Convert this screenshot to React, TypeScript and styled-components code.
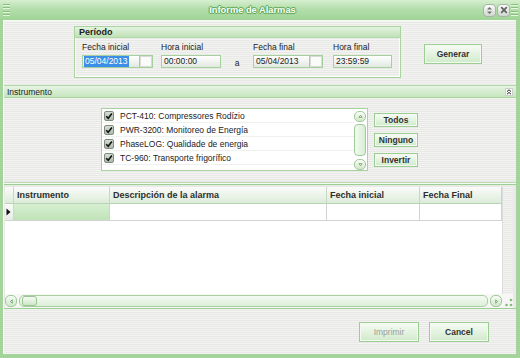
import React from 'react';
import styled, { createGlobalStyle, css } from 'styled-components';

const GlobalStyle = createGlobalStyle`
  html, body { margin: 0; padding: 0; background: #fff; }
  body { font-family: "Liberation Sans", Arial, sans-serif; }
  * { box-sizing: border-box; }
  #root { width: 520px; height: 358px; }
`;

const stripes = css`
  background: repeating-linear-gradient(
    to bottom,
    #f3f3f1 0px,
    #f3f3f1 1px,
    #e8e9e6 1px,
    #e8e9e6 2px
  );
`;

const Window = styled.div`
  width: 520px;
  height: 358px;
  display: flex;
  flex-direction: column;
  background: #a4d49b;
  overflow: hidden;
`;

const TitleBar = styled.div`
  height: 20px;
  flex: none;
  display: flex;
  align-items: center;
  padding: 0 2px 0 3px;
  background: linear-gradient(#d6efd0, #b4deab 45%, #9fd496);
`;

const Grip = styled.div`
  width: 7px;
  height: 14px;
  display: flex;
  flex-direction: column;
  justify-content: space-between;
  padding: 1px 0;
`;

const GripLine = styled.div`
  height: 2px;
  border-top: 1px solid #86c27c;
  border-bottom: 1px solid #e6f5e2;
`;

const Title = styled.div`
  flex: 1;
  text-align: center;
  font-size: 9.3px;
  font-weight: bold;
  color: #fbfff9;
  padding-left: 12px;
  text-shadow: 1px 0 0 #5ea853, -1px 0 0 #5ea853, 0 1px 0 #5ea853, 0 -1px 0 #5ea853,
    0 0 2px #3f8a35;
`;

const TitleButton = styled.div`
  width: 13px;
  height: 13px;
  border-radius: 4px;
  border: 1px solid #a9b3a8;
  background: linear-gradient(#fbfbfb, #d2d6d1);
  display: flex;
  align-items: center;
  justify-content: center;
  margin-right: 1px;
`;

const Frame = styled.div`
  flex: 1;
  display: flex;
  padding: 0 4px 4px 3px;
  min-height: 0;
`;

const Client = styled.div`
  flex: 1;
  display: flex;
  flex-direction: column;
  border-left: 1px solid #f7fbf6;
  border-top: 1px solid #f7fbf6;
  min-height: 0;
`;

const TopPanel = styled.div`
  ${stripes};
  height: 65px;
  flex: none;
  display: flex;
  align-items: flex-start;
  padding: 5px 0 0 70px;
  border-bottom: 1px solid #b2daa9;
`;

const GroupBox = styled.div`
  width: 327px;
  height: 52px;
  border: 1px solid #a9d4a0;
  box-shadow: inset 0 0 0 1px #fbfdfb;
  display: flex;
  flex-direction: column;
`;

const GroupHeader = styled.div`
  height: 11px;
  line-height: 11px;
  padding-left: 4px;
  font-size: 9px;
  font-weight: bold;
  color: #222;
  background: linear-gradient(#e3f3df, #bfe2b7);
  border-bottom: 1px solid #b3d9aa;
`;

const FieldsRow = styled.div`
  display: flex;
  align-items: flex-end;
  padding: 4px 0 0 7px;
`;

const Field = styled.div<{ $w: number; $mr?: number }>`
  width: ${(p) => p.$w}px;
  margin-right: ${(p) => p.$mr ?? 0}px;
  display: flex;
  flex-direction: column;
  gap: 2px;
`;

const Label = styled.div`
  font-size: 8.5px;
  line-height: 11px;
  height: 11px;
  color: #222;
`;

const inputBase = css`
  height: 13px;
  border: 1px solid #a6d09d;
  background: linear-gradient(#ffffff, #e2e9e0);
  font-size: 8.5px;
  line-height: 11px;
  color: #222;
`;

const Combo = styled.div`
  ${inputBase};
  display: flex;
`;

const ComboText = styled.div<{ $pl?: number }>`
  flex: 1;
  padding-left: ${(p) => p.$pl ?? 1}px;
  overflow: hidden;
  white-space: nowrap;
`;

const Selected = styled.span`
  background: #3b8fe6;
  color: #fff;
  padding: 0 1px;
  display: inline-block;
  line-height: 11px;
`;

const ComboButton = styled.div`
  width: 13px;
  border-left: 1px solid #a6d09d;
  background: #fbfbfb;
  box-shadow: inset 0 0 0 1px #d6dcd5;
`;

const TextInput = styled.div`
  ${inputBase};
  padding-left: 2px;
`;

const Sep = styled.div`
  width: 6px;
  margin: 0 13px;
  font-size: 8.5px;
  line-height: 10px;
  color: #222;
  text-align: center;
`;

const Button = styled.div<{ $w: number; $h: number; $disabled?: boolean }>`
  width: ${(p) => p.$w}px;
  height: ${(p) => p.$h}px;
  flex: none;
  border: 1px solid #9ccd93;
  background: linear-gradient(#f7fcf6, #d0eaca);
  box-shadow: inset 0 0 0 1px #f4faf2;
  display: flex;
  align-items: center;
  justify-content: center;
  font-size: 8.5px;
  font-weight: ${(p) => (p.$disabled ? 'normal' : 'bold')};
  color: ${(p) => (p.$disabled ? '#9aa09a' : '#333')};
`;

const GenerarWrap = styled.div`
  margin: 18px 0 0 23px;
`;

const SectionHeader = styled.div`
  height: 12px;
  flex: none;
  display: flex;
  align-items: center;
  padding: 0 3px 0 3px;
  font-size: 8.5px;
  color: #222;
  background: linear-gradient(#e6f4e2, #c6e5bf);
  border-bottom: 1px solid #a8d59e;
`;

const SectionTitle = styled.div`
  flex: 1;
`;

const CollapseBtn = styled.div`
  width: 8px;
  height: 8px;
  background: #fbfbfb;
  border: 1px solid #c9d2c8;
  display: flex;
  align-items: center;
  justify-content: center;
`;

const InstrPanel = styled.div`
  ${stripes};
  height: 82px;
  flex: none;
  display: flex;
  align-items: flex-start;
  padding: 10px 0 0 97px;
`;

const ListBox = styled.div`
  width: 267px;
  height: 63px;
  border: 1px solid #a9d4a0;
  background: #fff;
  display: flex;
`;

const ListRows = styled.div`
  flex: 1;
  display: flex;
  flex-direction: column;
`;

const ListRow = styled.div`
  height: 14px;
  display: flex;
  align-items: center;
  padding-left: 2px;
  border-bottom: 1px solid #eef1ee;
  font-size: 8.5px;
  color: #222;
  white-space: nowrap;
`;

const CheckBox = styled.div`
  width: 10px;
  height: 10px;
  border-radius: 2px;
  border: 1px solid #7e8c7d;
  background: linear-gradient(#d5ddd4, #aebbad);
  display: flex;
  align-items: center;
  justify-content: center;
  margin-right: 6px;
`;

const VScroll = styled.div`
  width: 13px;
  display: flex;
  flex-direction: column;
  padding: 2px 0 0 0;
  background: #fff;
`;

const ScrollArrow = styled.div`
  width: 12px;
  height: 11px;
  border: 1px solid #a1c99a;
  border-radius: 5px;
  background: linear-gradient(#fafdf9, #d0e8ca);
  display: flex;
  align-items: center;
  justify-content: center;
`;

const VThumb = styled.div`
  width: 12px;
  height: 32px;
  margin: 2px 0;
  border: 1px solid #9fc998;
  border-radius: 4px;
  background: linear-gradient(to right, #f4faf3, #d8edd3);
`;

const VTrackRest = styled.div`
  flex: 1;
`;

const SideButtons = styled.div`
  display: flex;
  flex-direction: column;
  gap: 6px;
  margin: 5px 0 0 6px;
`;

const Splitter = styled.div`
  height: 5px;
  flex: none;
  background: linear-gradient(
    to bottom,
    #eeeeec 0px,
    #e6e7e4 2px,
    #b6dcad 2px,
    #b6dcad 3px,
    #f5faf4 3px,
    #f5faf4 4px,
    #9ccf93 4px,
    #9ccf93 5px
  );
`;

const Grid = styled.div`
  height: 124px;
  flex: none;
  display: flex;
  flex-direction: column;
  padding: 2px 3px 0 1px;
  background: #e9eae7;
  border-bottom: 1px solid #9ccf93;
`;

const GridMain = styled.div`
  flex: 1;
  display: flex;
  min-height: 0;
`;

const Table = styled.div`
  width: 497px;
  background: #fff;
  display: flex;
  flex-direction: column;
`;

const Row = styled.div`
  display: flex;
  height: 17px;
`;

const HeadCell = styled.div<{ $w: number }>`
  width: ${(p) => p.$w}px;
  height: 17px;
  flex: none;
  padding-left: 3px;
  font-size: 9px;
  font-weight: bold;
  line-height: 16px;
  color: #2e2e2e;
  background: linear-gradient(#fbfbfa, #dcecd9);
  border-right: 1px solid #c8d6c6;
  border-bottom: 1px solid #b9d4b5;
  white-space: nowrap;
  overflow: hidden;
`;

const Cell = styled.div<{ $w: number; $sel?: boolean }>`
  width: ${(p) => p.$w}px;
  height: 17px;
  flex: none;
  border-right: 1px solid #d2d2d2;
  border-bottom: 1px solid #d2d2d2;
  background: ${(p) => (p.$sel ? 'linear-gradient(#d6f0d1, #bfe3b8)' : '#fff')};
`;

const RowHeadCell = styled.div`
  width: 9px;
  height: 17px;
  flex: none;
  border-right: 1px solid #d2d2d2;
  border-bottom: 1px solid #d2d2d2;
  background: linear-gradient(#fbfbfa, #e6ece5);
  display: flex;
  align-items: center;
  padding-left: 1px;
`;

const VGutter = styled.div`
  ${stripes};
  flex: 1;
  border-left: 1px solid #dcdcdc;
`;

const HScroll = styled.div`
  height: 14px;
  flex: none;
  display: flex;
  align-items: center;
  gap: 2px;
  background: #f6f6f5;
`;

const HArrow = styled.div`
  width: 12px;
  height: 12px;
  border: 1px solid #a1c99a;
  border-radius: 5px;
  background: linear-gradient(#f7fcf6, #cfe7c9);
  display: flex;
  align-items: center;
  justify-content: center;
`;

const HTrack = styled.div`
  flex: 1;
  height: 12px;
  border: 1px solid #a7cfa0;
  border-radius: 5px;
  background: linear-gradient(#f4faf3, #dcefd8);
  padding: 0 2px;
  display: flex;
  align-items: center;
`;

const HThumb = styled.div`
  width: 15px;
  height: 10px;
  border: 1px solid #98c491;
  border-radius: 3px;
  background: linear-gradient(#f6fbf5, #cde6c7);
`;

const GripDots = styled.div`
  width: 9px;
  height: 12px;
  flex: none;
  display: flex;
  align-items: flex-end;
  justify-content: flex-end;
`;

const BottomPanel = styled.div`
  ${stripes};
  flex: 1;
  display: flex;
  justify-content: flex-end;
  align-items: flex-start;
  gap: 10px;
  padding: 13px 27px 0 0;
`;

const Check = () => (
  <svg width="8" height="8" viewBox="0 0 8 8">
    <path d="M1.2 4.2 L3.2 6.2 L6.9 1.6" fill="none" stroke="#111" strokeWidth="1.6" />
  </svg>
);

const Tri = ({ dir, size = 5, color = '#6a9a64' }: { dir: 'up' | 'down' | 'left' | 'right'; size?: number; color?: string }) => {
  const paths: Record<string, string> = {
    up: 'M1 4 L3 1.5 L5 4 Z',
    down: 'M1 2 L3 4.5 L5 2 Z',
    left: 'M4 1 L1.5 3 L4 5 Z',
    right: 'M2 1 L4.5 3 L2 5 Z',
  };
  return (
    <svg width={size} height={size} viewBox="0 0 6 6">
      <path d={paths[dir]} fill="none" stroke={color} strokeWidth="0.9" />
    </svg>
  );
};

const items = [
  'PCT-410: Compressores Rodízio',
  'PWR-3200: Monitoreo de Energía',
  'PhaseLOG: Qualidade de energia',
  'TC-960: Transporte frigorífico',
];

const columns = [
  { w: 96, t: 'Instrumento' },
  { w: 217, t: 'Descripción de la alarma' },
  { w: 93, t: 'Fecha inicial' },
  { w: 82, t: 'Fecha Final' },
];

export default function App() {
  return (
    <>
      <GlobalStyle />
      <Window>
        <TitleBar>
          <Grip>
            {[0, 1, 2, 3].map((i) => (
              <GripLine key={i} />
            ))}
          </Grip>
          <Title>Informe de Alarmas</Title>
          <TitleButton>
            <svg width="7" height="9" viewBox="0 0 7 9">
              <path d="M1 3.6 L3.5 1 L6 3.6 Z" fill="#6b726a" />
              <path d="M1 5.4 L3.5 8 L6 5.4 Z" fill="#6b726a" />
            </svg>
          </TitleButton>
          <TitleButton>
            <svg width="8" height="8" viewBox="0 0 8 8">
              <path d="M1.2 1.2 L6.8 6.8 M6.8 1.2 L1.2 6.8" stroke="#5f665e" strokeWidth="1.8" />
            </svg>
          </TitleButton>
          <Grip>
            {[0, 1, 2, 3].map((i) => (
              <GripLine key={i} />
            ))}
          </Grip>
        </TitleBar>
        <Frame>
          <Client>
            <TopPanel>
              <GroupBox>
                <GroupHeader>Período</GroupHeader>
                <FieldsRow>
                  <Field $w={71} $mr={8}>
                    <Label>Fecha inicial</Label>
                    <Combo>
                      <ComboText>
                        <Selected>05/04/2013</Selected>
                      </ComboText>
                      <ComboButton />
                    </Combo>
                  </Field>
                  <Field $w={60}>
                    <Label>Hora inicial</Label>
                    <TextInput>00:00:00</TextInput>
                  </Field>
                  <Sep>a</Sep>
                  <Field $w={70} $mr={10}>
                    <Label>Fecha final</Label>
                    <Combo>
                      <ComboText $pl={2}>05/04/2013</ComboText>
                      <ComboButton />
                    </Combo>
                  </Field>
                  <Field $w={59}>
                    <Label>Hora final</Label>
                    <TextInput>23:59:59</TextInput>
                  </Field>
                </FieldsRow>
              </GroupBox>
              <GenerarWrap>
                <Button $w={58} $h={20}>Generar</Button>
              </GenerarWrap>
            </TopPanel>
            <SectionHeader>
              <SectionTitle>Instrumento</SectionTitle>
              <CollapseBtn>
                <svg width="6" height="6" viewBox="0 0 6 6">
                  <path d="M1 2.6 L3 0.8 L5 2.6 M1 5.2 L3 3.4 L5 5.2" fill="none" stroke="#222" strokeWidth="1" />
                </svg>
              </CollapseBtn>
            </SectionHeader>
            <InstrPanel>
              <ListBox>
                <ListRows>
                  {items.map((it) => (
                    <ListRow key={it}>
                      <CheckBox>
                        <Check />
                      </CheckBox>
                      {it}
                    </ListRow>
                  ))}
                </ListRows>
                <VScroll>
                  <ScrollArrow>
                    <Tri dir="up" />
                  </ScrollArrow>
                  <VThumb />
                  <VTrackRest />
                  <ScrollArrow>
                    <Tri dir="down" />
                  </ScrollArrow>
                </VScroll>
              </ListBox>
              <SideButtons>
                <Button $w={44} $h={14}>Todos</Button>
                <Button $w={44} $h={14}>Ninguno</Button>
                <Button $w={44} $h={14}>Invertir</Button>
              </SideButtons>
            </InstrPanel>
            <Splitter />
            <Grid>
              <GridMain>
                <Table>
                  <Row>
                    <HeadCell $w={9} />
                    {columns.map((c) => (
                      <HeadCell key={c.t} $w={c.w}>
                        {c.t}
                      </HeadCell>
                    ))}
                  </Row>
                  <Row>
                    <RowHeadCell>
                      <svg width="5" height="8" viewBox="0 0 5 8">
                        <path d="M0.5 0.5 L4.5 4 L0.5 7.5 Z" fill="#111" />
                      </svg>
                    </RowHeadCell>
                    {columns.map((c, i) => (
                      <Cell key={c.t} $w={c.w} $sel={i === 0} />
                    ))}
                  </Row>
                </Table>
                <VGutter />
              </GridMain>
              <HScroll>
                <HArrow>
                  <Tri dir="left" />
                </HArrow>
                <HTrack>
                  <HThumb />
                </HTrack>
                <HArrow>
                  <Tri dir="right" />
                </HArrow>
                <GripDots>
                  <svg width="9" height="9" viewBox="0 0 9 9">
                    <circle cx="7" cy="2" r="1.3" fill="#7fbf75" />
                    <circle cx="7" cy="7" r="1.3" fill="#7fbf75" />
                    <circle cx="2.5" cy="7" r="1.3" fill="#7fbf75" />
                  </svg>
                </GripDots>
              </HScroll>
            </Grid>
            <BottomPanel>
              <Button $w={60} $h={20} $disabled>
                Imprimir
              </Button>
              <Button $w={60} $h={20}>Cancel</Button>
            </BottomPanel>
          </Client>
        </Frame>
      </Window>
    </>
  );
}
